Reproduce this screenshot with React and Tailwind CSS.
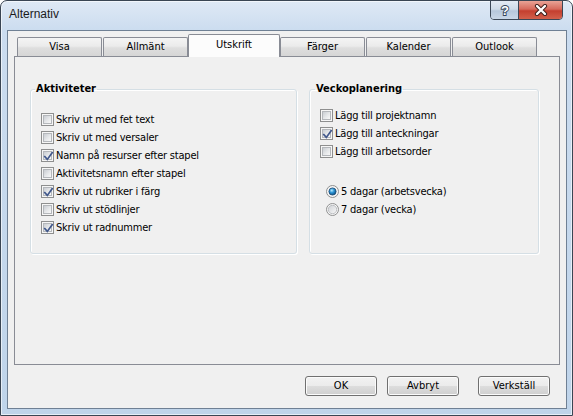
import React from "react";

function CheckBox({ checked }) {
  return (
    <span className="relative w-[13px] h-[13px] shrink-0 border border-[#8e8f8f] bg-[#f6f6f6] p-px flex">
      <span className="flex-1 border border-[#b4b7bb] bg-[linear-gradient(135deg,#c9cdd2_0%,#e6e8ea_55%,#f8f8f8_100%)]" />
      {checked && (
        <svg className="absolute left-0 top-0" width="13" height="13" viewBox="0 0 13 13">
          <path d="M2.8 6.6 L5.3 9.4 L10.2 2.6" fill="none" stroke="#42598c" strokeWidth="1.7" strokeLinecap="square" />
        </svg>
      )}
    </span>
  );
}

function Radio({ checked }) {
  return (
    <svg width="13" height="13" viewBox="0 0 13 13" className="shrink-0">
      <defs>
        <linearGradient id="rOff" x1="0" y1="0" x2="1" y2="1">
          <stop offset="0" stopColor="#cfd2d6" />
          <stop offset="1" stopColor="#f8f8f8" />
        </linearGradient>
        <radialGradient id="rOn" cx="0.4" cy="0.35" r="0.7">
          <stop offset="0" stopColor="#b8ecff" />
          <stop offset="0.45" stopColor="#2b93d4" />
          <stop offset="1" stopColor="#0b4a7c" />
        </radialGradient>
      </defs>
      <circle cx="6.5" cy="6.5" r="6" fill="#f6f6f6" stroke="#8e8f8f" strokeWidth="1" />
      {checked ? (
        <circle cx="6.5" cy="6.5" r="3.6" fill="url(#rOn)" stroke="#1d4a73" strokeWidth="0.8" />
      ) : (
        <circle cx="6.5" cy="6.5" r="4.2" fill="url(#rOff)" stroke="#b1b4b8" strokeWidth="0.8" />
      )}
    </svg>
  );
}

function CheckRow({ label, checked }) {
  return (
    <div className="h-[18px] flex items-center gap-[2px] pl-[10px]">
      <CheckBox checked={checked} />
      <span className="leading-[13px] tracking-[-0.2px]">{label}</span>
    </div>
  );
}

function RadioRow({ label, checked }) {
  return (
    <div className="h-[18px] flex items-center gap-[2px] pl-[16px]">
      <Radio checked={checked} />
      <span className="leading-[13px] tracking-[-0.2px]">{label}</span>
    </div>
  );
}

function Tab({ label, selected, className = "" }) {
  if (selected) {
    return (
      <div
        className={
          "relative z-10 -mb-px h-[23px] w-[92px] flex items-center justify-center border border-b-0 border-[#898c95] rounded-t-[2px] bg-[#fcfcfc] pb-[2px] " +
          className
        }
      >
        {label}
      </div>
    );
  }
  return (
    <div
      className={
        "h-[19px] w-[85px] flex items-center justify-center border border-b-0 border-[#898c95] rounded-t-[2px] bg-[linear-gradient(to_bottom,#f4f4f4_0%,#ebebeb_45%,#dedede_55%,#d6d6d6_100%)] " +
        className
      }
    >
      {label}
    </div>
  );
}

function Button({ label, className = "" }) {
  return (
    <div
      className={
        "w-[72px] h-[20px] flex items-center justify-center border border-[#707070] rounded-[3px] shadow-[inset_0_0_0_1px_#fbfbfb] bg-[linear-gradient(to_bottom,#f2f2f2_0%,#ebebeb_50%,#dddddd_50%,#cfcfcf_100%)] " +
        className
      }
    >
      {label}
    </div>
  );
}

export default function App() {
  return (
    <div className="w-[573px] h-[416px] flex flex-col border border-[#3a4553] rounded-t-[7px] overflow-hidden bg-[linear-gradient(to_bottom,#dfe9f5_0px,#cbdcef_30px,#bfd4ea_100%)] shadow-[inset_0_0_0_1px_rgba(255,255,255,0.6)] [font-family:'DejaVu_Sans_Condensed',sans-serif] text-[11px] text-black">
      {/* Title bar */}
      <div className="h-[29px] shrink-0 flex items-start">
        <div className="flex-1 pl-[8px] pt-[6px] text-[12px] leading-[15px] [font-family:'Liberation_Sans',sans-serif] text-[#1b1b1b]">
          Alternativ
        </div>
        <div className="-mt-px mr-[9px] h-[20px] flex border border-[#3b4756] rounded-b-[4px] overflow-hidden">
          <div className="w-[27px] flex items-center justify-center bg-[linear-gradient(to_bottom,#e3eaf3_0%,#cfdbe8_45%,#b6c7db_55%,#c9d7e7_100%)]">
            <svg width="12" height="14" viewBox="0 0 12 14">
              <text
                x="6"
                y="12"
                textAnchor="middle"
                fontFamily="Liberation Sans, sans-serif"
                fontWeight="bold"
                fontSize="13"
                fill="#ffffff"
                stroke="#34455a"
                strokeWidth="1.8"
                paintOrder="stroke"
              >
                ?
              </text>
            </svg>
          </div>
          <div className="w-px bg-[#3b4756]" />
          <div className="w-[43px] flex items-center justify-center bg-[linear-gradient(to_bottom,#e9a396_0%,#d66a5c_45%,#c43f2f_55%,#d2604b_100%)]">
            <svg width="14" height="12" viewBox="0 0 14 12">
              <path d="M3 2 L11 10 M11 2 L3 10" stroke="#3a1c18" strokeWidth="4.2" strokeLinecap="round" />
              <path d="M3 2 L11 10 M11 2 L3 10" stroke="#ffffff" strokeWidth="2.4" strokeLinecap="round" />
            </svg>
          </div>
        </div>
      </div>

      {/* Client area */}
      <div className="ml-[6px] w-[560px] h-[379px] shrink-0 border border-[#6f8094] bg-[#f0f0f0] flex flex-col px-[6px] pt-[3px]">
        {/* Tabs */}
        <div className="h-[22px] flex items-end pl-[3px]">
          <Tab label="Visa" />
          <Tab label="Allmänt" className="ml-px" />
          <Tab label="Utskrift" selected />
          <Tab label="Färger" />
          <Tab label="Kalender" className="ml-px" />
          <Tab label="Outlook" className="ml-px" />
        </div>

        {/* Tab page */}
        <div className="h-[309px] border border-[#898c95] bg-[#f0f0f0] flex items-start gap-[12px] pl-[15px] pt-[25px]">
          <fieldset className="w-[267px] h-[172px] border border-[#d5dfe5] rounded-[3px] shadow-[inset_1px_1px_0_#ffffff,1px_1px_0_#ffffff]">
            <legend className="ml-[4px] px-px font-bold leading-[14px]">Aktiviteter</legend>
            <div className="pt-[14px] flex flex-col">
              <CheckRow label="Skriv ut med fet text" />
              <CheckRow label="Skriv ut med versaler" />
              <CheckRow label="Namn på resurser efter stapel" checked />
              <CheckRow label="Aktivitetsnamn efter stapel" />
              <CheckRow label="Skriv ut rubriker i färg" checked />
              <CheckRow label="Skriv ut stödlinjer" />
              <CheckRow label="Skriv ut radnummer" checked />
            </div>
          </fieldset>

          <fieldset className="w-[230px] h-[172px] border border-[#d5dfe5] rounded-[3px] shadow-[inset_1px_1px_0_#ffffff,1px_1px_0_#ffffff]">
            <legend className="ml-[5px] px-px font-bold leading-[14px]">Veckoplanering</legend>
            <div className="pt-[10px] flex flex-col">
              <CheckRow label="Lägg till projektnamn" />
              <CheckRow label="Lägg till anteckningar" checked />
              <CheckRow label="Lägg till arbetsorder" />
              <div className="mt-[22px] flex flex-col">
                <RadioRow label="5 dagar (arbetsvecka)" checked />
                <RadioRow label="7 dagar (vecka)" />
              </div>
            </div>
          </fieldset>
        </div>

        {/* Buttons */}
        <div className="mt-[11px] h-[20px] flex justify-end pr-[10px]">
          <Button label="OK" />
          <Button label="Avbryt" className="ml-[10px]" />
          <Button label="Verkställ" className="ml-[19px]" />
        </div>
      </div>
    </div>
  );
}
